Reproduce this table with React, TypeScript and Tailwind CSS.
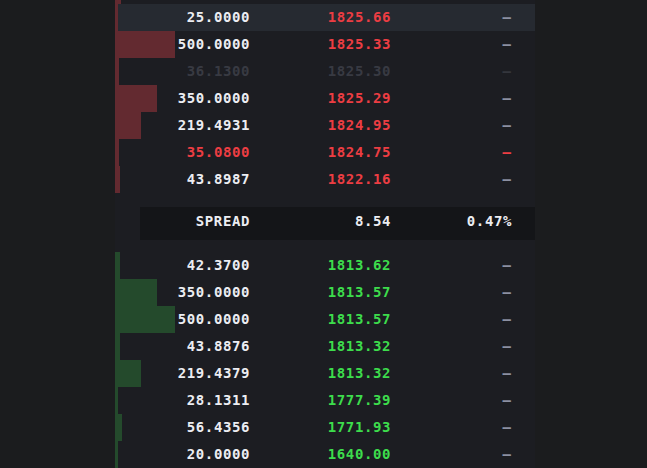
import React from "react";

type Level = {
  qty: string;
  price: string;
  tone?: "dim" | "alert";
};

const asks: Level[] = [
  { qty: "", price: "" },
  { qty: "25.0000", price: "1825.66" },
  { qty: "500.0000", price: "1825.33" },
  { qty: "36.1300", price: "1825.30", tone: "dim" },
  { qty: "350.0000", price: "1825.29" },
  { qty: "219.4931", price: "1824.95" },
  { qty: "35.0800", price: "1824.75", tone: "alert" },
  { qty: "43.8987", price: "1822.16" },
];

const bids: Level[] = [
  { qty: "42.3700", price: "1813.62" },
  { qty: "350.0000", price: "1813.57" },
  { qty: "500.0000", price: "1813.57" },
  { qty: "43.8876", price: "1813.32" },
  { qty: "219.4379", price: "1813.32" },
  { qty: "28.1311", price: "1777.39" },
  { qty: "56.4356", price: "1771.93" },
  { qty: "20.0000", price: "1640.00" },
];

// bar width in px, biggest level (500) fills 60px
const barWidth = (qty: string) => {
  const q = parseFloat(qty || "50");
  return Math.max(3, Math.round((q / 500) * 60));
};

function Row({ level, side, highlight }: { level: Level; side: "ask" | "bid"; highlight?: boolean }) {
  const dim = level.tone === "dim";
  const alert = level.tone === "alert";

  const qtyColor = dim ? "text-[#383a42]" : alert ? "text-[#ec3d43]" : "text-[#ecedf2]";
  const priceColor = dim
    ? "text-[#383a42]"
    : side === "ask"
    ? "text-[#ec3d43]"
    : "text-[#3ddc4c]";
  const dashColor = dim ? "text-[#34363d]" : alert ? "text-[#ec3d43]" : "text-[#8c90a2]";

  return (
    <div className={`relative flex h-[27px] items-center ${highlight ? "bg-[#262a31]" : ""}`}>
      <div
        className={`absolute left-0 top-0 h-full ${side === "ask" ? "bg-[#632a30]" : "bg-[#244a2c]"}`}
        style={{ width: barWidth(level.qty) }}
      />
      <span className={`relative w-[135px] text-right ${qtyColor}`}>{level.qty}</span>
      <span className={`relative w-[141px] text-right ${priceColor}`}>{level.price}</span>
      <span className={`relative w-[120px] text-right tracking-normal ${dashColor}`}>{level.price ? "–" : ""}</span>
    </div>
  );
}

export default function App() {
  return (
    <div
      className="h-[468px] w-[647px] overflow-hidden bg-[#1b1c1e] text-[14px] font-bold tracking-[0.6px]"
      style={{ fontFamily: '"DejaVu Sans Mono", "Liberation Mono", monospace' }}
    >
      <div className="ml-[115px] flex h-full w-[420px] flex-col bg-[#1c1d22]">
        <div className="-mt-[23px] flex flex-col">
          {asks.map((level, i) => (
            <Row key={i} level={level} side="ask" highlight={i === 1} />
          ))}
        </div>

        <div className="ml-[25px] mt-[14px] flex h-[35px] items-center bg-[#141518] pb-[4px] text-[#ecedf2]">
          <span className="w-[110px] text-right">SPREAD</span>
          <span className="w-[141px] text-right">8.54</span>
          <span className="w-[121px] text-right">0.47%</span>
        </div>

        <div className="mt-[12px] flex flex-col">
          {bids.map((level, i) => (
            <Row key={i} level={level} side="bid" />
          ))}
        </div>
      </div>
    </div>
  );
}
